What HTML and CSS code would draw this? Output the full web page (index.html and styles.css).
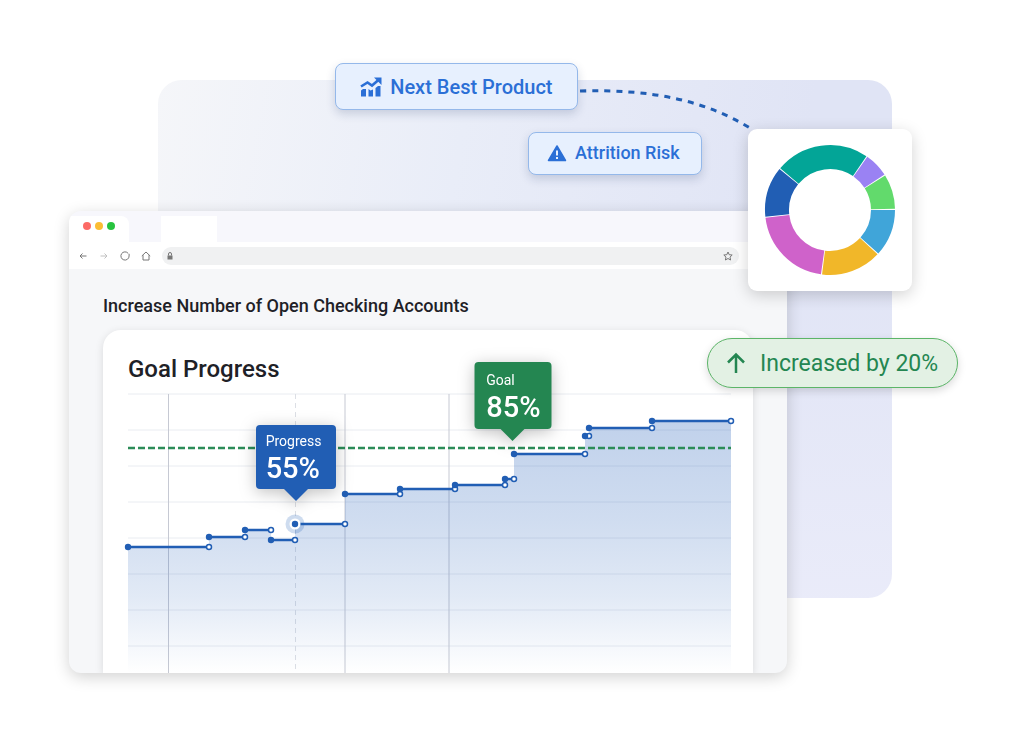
FILE: index.html
```html
<!DOCTYPE html>
<html lang="en">
<head>
    <meta charset="UTF-8">
    <meta name="viewport" content="width=device-width, initial-scale=1.0">
    <title>Goal Progress</title>
    <link rel="stylesheet" href="styles.css">
</head>
<body>
    <main class="scene">
        <div class="backdrop"></div>

        <!-- Browser window -->
        <section class="browser">
            <div class="tab-strip">
                <div class="lights">
                    <span class="light red"></span>
                    <span class="light yellow"></span>
                    <span class="light green"></span>
                </div>
                <div class="tab"></div>
            </div>
            <div class="toolbar">
                <div class="nav">
                    <button type="button" aria-label="Back">
                        <svg viewBox="0 0 10 10"><path d="M8.500 5H2M4.500 2.500 2 5l2.500 2.500"/></svg>
                    </button>
                    <button type="button" aria-label="Forward" class="disabled">
                        <svg viewBox="0 0 10 10"><path d="M1.500 5H8M5.500 2.500 8 5 5.500 7.500"/></svg>
                    </button>
                    <button type="button" aria-label="Reload">
                        <svg viewBox="0 0 10 10"><path d="M8.200 2.400A4.100 4.100 0 1 0 9.100 5M9.100 5V2.800"/></svg>
                    </button>
                    <button type="button" aria-label="Home">
                        <svg viewBox="0 0 10 10"><path d="M.8 5 5 1l4.200 4M2 4.200V9h6V4.200"/></svg>
                    </button>
                </div>
                <div class="address">
                    <svg class="lock" viewBox="0 0 10 10"><path d="M2.500 4.500h5v4h-5z" fill="#777"/><path d="M3.500 4.500V3a1.500 1.500 0 0 1 3 0v1.500" fill="none" stroke="#777"/></svg>
                    <input type="text" aria-label="Address">
                    <button type="button" aria-label="Bookmark">
                        <svg viewBox="0 0 12 12"><path d="m6 2 1.200 2.700 3 .3L8 7.100l.6 2.900L6 8.500 3.400 10 4 7.100 1.800 5l3-.3z"/></svg>
                    </button>
                </div>
            </div>

            <div class="page">
                <h1>Increase Number of Open Checking Accounts</h1>
                <div class="card">
                    <h2>Goal Progress</h2>
                    <div class="chart">
                        <svg viewBox="0 0 603 279" role="img" aria-label="Goal progress over time">
                            <defs>
                                <linearGradient id="fill" gradientUnits="userSpaceOnUse" x1="0" y1="27" x2="0" y2="279">
                                    <stop offset="0" stop-color="#1f5cb8" stop-opacity=".28"/>
                                    <stop offset=".4" stop-color="#1f5cb8" stop-opacity=".21"/>
                                    <stop offset=".7" stop-color="#1f5cb8" stop-opacity=".13"/>
                                    <stop offset="1" stop-color="#1f5cb8" stop-opacity="0"/>
                                </linearGradient>
                            </defs>
                            <path class="grid-h" d="M0 0H603M0 36H603M0 72H603M0 108H603M0 144H603M0 180H603M0 216H603M0 252H603"/>
                            <path class="grid-v" d="M40.500 0V279M217 0V279M321 0V279"/>
                            <path class="grid-today" d="M167.500 0V279"/>
                            <path fill="url(#fill)" d="M0 153H81V143H117V136H143V146H167V130H217V100H272V95H327V91H377V85H386V60H457V42H461V34H524V27H603V279H0Z"/>
                            <path class="goal-line" d="M0 54H603"/>
                            <g id="steps"></g>
                        </svg>
                        <div class="tooltip progress">
                            <span>Progress</span>
                            <strong>55%</strong>
                        </div>
                        <div class="tooltip goal">
                            <span>Goal</span>
                            <strong>85%</strong>
                        </div>
                    </div>
                </div>
            </div>
        </section>

        <!-- Floating labels -->
        <svg class="connector" viewBox="0 0 173 42"><path d="M2 3C73 1 126 12 173 41"/></svg>

        <button type="button" class="chip product">
            <svg viewBox="0 0 22 20">
                <path d="M1 13.500 3 12h3v7.500H1zM8.500 12l2 1.500 2.500-1v7H8.500zM15.500 11 18 9h2.500v10.500h-5z" fill="#2b6fd6"/>
                <path d="M1 9.500 7.500 5.500l4.500 3L19 2.500" fill="none" stroke="#2b6fd6" stroke-width="2.600"/>
                <path d="M14 .5H21.500V8z" fill="#2b6fd6"/>
            </svg>
            Next Best Product
        </button>

        <button type="button" class="chip risk">
            <svg viewBox="0 0 20 18">
                <path d="M10 2 18.500 16.500H1.500Z" fill="#2b6fd6" stroke="#2b6fd6" stroke-width="1.500" stroke-linejoin="round"/>
                <path d="M10 6.500V11.500M10 13V15" stroke="#e7f0fe" stroke-width="2"/>
            </svg>
            Attrition Risk
        </button>

        <div class="donut">
            <svg viewBox="0 0 132 132" role="img" aria-label="Product mix">
                <g id="donut" transform="rotate(-90 66 66)"></g>
            </svg>
        </div>

        <div class="pill">
            <svg viewBox="0 0 20 22"><path d="M10 21V2.500M2 10.500l8-8 8 8"/></svg>
            Increased by 20%
        </div>
    </main>

    <script src="script.js"></script>
</body>
</html>
```

FILE: styles.css
```css
* {
    box-sizing: border-box;
}

body {
    margin: 0;
    background: #fff;
    font-family: Roboto, "Liberation Sans", sans-serif;
    color: #1e2127;
}

h1, h2 {
    margin: 0;
    font-weight: 500;
}

button {
    border: none;
    padding: 0;
    background: none;
    font-family: inherit;
    cursor: pointer;
}

/* The window overlaps the backdrop through shared grid tracks */
.scene {
    position: relative;
    display: grid;
    grid-template-columns: 69fr 89fr 629fr 105fr 132fr;
    grid-template-rows: 80px 131px auto 75px 61px;
}

.backdrop {
    grid-area: 2 / 3 / 4 / 5;
    border-radius: 24px;
    background: linear-gradient(180deg, rgba(240,240,252,0) 30%, rgba(240,240,252,0.6)), linear-gradient(100deg, #f5f6f9, #e9edf8 38%, #e0e4f5 80%);
}

.browser {
    grid-area: 3 / 2 / 5 / 4;
    position: relative;
    overflow: hidden;
    border-radius: 12px;
    background: #f6f7f9;
}

.browser,
.donut {
    box-shadow: 0 4px 16px rgba(0,0,0,0.18);
}

/* Browser chrome */
.tab-strip {
    display: flex;
    height: 31px;
    padding-top: 5px;
    background: #f7f7fc;
}

.lights {
    display: flex;
    gap: 4px;
    width: 60px;
    padding: 6px 0 0 14px;
    background: #fff;
    border-radius: 0 8px 0 0;
}

.light {
    width: 8px;
    height: 8px;
    border-radius: 50%;
}

.red { background: #fc6a66; }
.yellow { background: #fbbd34; }
.green { background: #28c33f; }

.tab {
    width: 56px;
    margin-left: 32px;
    background: #fff;
}

.toolbar {
    display: flex;
    align-items: center;
    height: 27px;
    padding: 0 48px 0 9px;
    background: #fff;
}

.nav {
    display: flex;
    gap: 11px;
    margin-right: 11px;
}

.nav button,
.nav svg,
.lock {
    display: block;
    width: 10px;
    height: 10px;
}

.nav svg,
.address button svg {
    display: block;
    fill: none;
    stroke: #777;
}

.nav .disabled {
    opacity: 0.45;
}

.address {
    display: flex;
    flex: 1;
    align-items: center;
    height: 18px;
    padding: 0 5px 0 3px;
    border-radius: 9px;
    background: #f0f1f2;
}

.address input {
    flex: 1;
    min-width: 0;
    height: 16px;
    border: none;
    outline: none;
    background: transparent;
    font-size: 12px;
}

.address button svg {
    width: 12px;
    height: 12px;
}

/* Page inside the window */
.page {
    padding: 24px 34px 0;
}

h1 {
    font-size: 18px;
    line-height: 26px;
}

.card {
    margin-top: 11px;
    padding: 26px 22px 0 25px;
    border-radius: 18px 18px 0 0;
    background: #fff;
    box-shadow: 0 2px 8px rgba(0,0,0,0.12);
}

h2 {
    font-size: 24px;
    line-height: 26px;
}

.chart {
    position: relative;
    margin-top: 12px;
}

.chart > svg {
    display: block;
    width: 100%;
    overflow: visible;
}

.grid-h { stroke: #e9ecf1; }
.grid-v { stroke: #c6c9d3; }
.grid-today { stroke: #dcdfe5; stroke-dasharray: 5 4; }
.goal-line { stroke: #2c8c58; stroke-width: 2.5; stroke-dasharray: 7 3; }
.step { stroke: #215eb4; stroke-width: 2.5; }
.dot { fill: #215eb4; }
.ring { fill: #fff; stroke: #215eb4; stroke-width: 1.5; }
.halo { fill: #215eb4; fill-opacity: 0.22; }

.tooltip {
    position: absolute;
    display: flex;
    flex-direction: column;
    padding: 7px 10px 3px;
    border-radius: 4px;
    color: #fff;
    transform: translate(-50%, -100%);
    filter: drop-shadow(0 3px 8px rgba(0,0,0,0.25));
}

.tooltip::after {
    content: "";
    position: absolute;
    top: calc(100% - 1px);
    left: 50%;
    margin-left: -13px;
    border: 13px solid transparent;
    border-bottom: none;
}

.tooltip span {
    font-size: 14px;
    line-height: 18px;
}

.tooltip strong {
    font-size: 29px;
    font-weight: 500;
    line-height: 36px;
}

.tooltip.progress {
    left: 27.8%;
    top: 34%;
    width: 80px;
    background: #215eb4;
}

.tooltip.progress::after {
    border-top-color: #215eb4;
}

.tooltip.goal {
    left: 63.8%;
    top: 12.4%;
    width: 77px;
    padding: 9px 12px 4px;
    background: #248651;
}

.tooltip.goal::after {
    border-top-color: #248651;
}

/* Floating labels */
.connector {
    position: absolute;
    top: 88px;
    left: 56.4%;
    width: 17%;
    fill: none;
    stroke: #215eb4;
    stroke-width: 3;
    stroke-dasharray: 6 6;
}

.chip {
    position: absolute;
    display: flex;
    align-items: center;
    justify-content: center;
    border: 1px solid #94b8ea;
    border-radius: 8px;
    background: #e7f0fe;
    box-shadow: 0 4px 10px rgba(30,50,100,0.18);
    color: #2b6fd6;
    font-weight: 500;
    white-space: nowrap;
}

.product {
    top: 63px;
    left: 32.7%;
    gap: 8px;
    width: 243px;
    height: 47px;
    font-size: 20px;
}

.product svg {
    width: 22px;
    height: 20px;
}

.risk {
    top: 132px;
    left: 51.6%;
    gap: 8px;
    width: 174px;
    height: 43px;
    padding-right: 4px;
    padding-bottom: 2px;
    font-size: 18px;
}

.risk svg {
    width: 20px;
    height: 18px;
}

.donut {
    position: absolute;
    top: 129px;
    left: 73%;
    width: 164px;
    padding: 15px 16px;
    border-radius: 9px;
    background: #fff;
}

.donut svg {
    display: block;
    width: 132px;
    height: 132px;
}

.pill {
    position: absolute;
    top: 338px;
    left: 69%;
    display: flex;
    align-items: center;
    justify-content: center;
    gap: 14px;
    width: 251px;
    height: 50px;
    border: 1px solid #5cb568;
    border-radius: 25px;
    background: #e3f1e4;
    box-shadow: 0 3px 8px rgba(0,0,0,0.15);
    color: #248651;
    font-size: 23px;
    white-space: nowrap;
}

.pill svg {
    width: 20px;
    height: 22px;
    fill: none;
    stroke: #248651;
    stroke-width: 2.5;
}
```

FILE: script.js
```js
const SVG = 'http://www.w3.org/2000/svg';

function add(parent, tag, attrs) {
    const el = document.createElementNS(SVG, tag);
    Object.keys(attrs).forEach(key => el.setAttribute(key, attrs[key]));
    parent.appendChild(el);
}

// Each step: start x, end x, y
const steps = [
    [0, 81, 153], [81, 117, 143], [117, 143, 136], [143, 167, 146],
    [167, 217, 130], [217, 272, 100], [272, 327, 95], [327, 377, 91],
    [377, 386, 85], [386, 457, 60], [457, 461, 42], [461, 524, 34],
    [524, 603, 27]
];
const stepGroup = document.getElementById('steps');
steps.forEach(([x1, x2, y]) => {
    add(stepGroup, 'line', { class: 'step', x1: x1, x2: x2, y1: y, y2: y });
    add(stepGroup, 'circle', { class: 'ring', cx: x2, cy: y, r: 2.5 });
});
// Current position marker sits under its dot
add(stepGroup, 'circle', { class: 'halo', cx: 167, cy: 130, r: 9.5 });
add(stepGroup, 'circle', { fill: '#fff', cx: 167, cy: 130, r: 5.5 });
steps.forEach(([x1, x2, y]) => {
    add(stepGroup, 'circle', { class: 'dot', cx: x1, cy: y, r: 3.2 });
});

// Slices: start and end angle, clockwise from the top
const slices = [
    [35, 58, '#9a82f3'], [58, 90, '#62da6c'], [90, 133, '#40a5d9'],
    [133, 188, '#f1b729'], [188, 264, '#cf62ca'], [264, 310, '#215eb4'],
    [310, 395, '#03a597']
];
const donut = document.getElementById('donut');
slices.forEach(([from, to, color]) => {
    add(donut, 'circle', {
        cx: 66, cy: 66, r: 53, fill: 'none', stroke: color, 'stroke-width': 24,
        pathLength: 360,
        'stroke-dasharray': (to - from - 1) + ' ' + (361 - to + from),
        transform: 'rotate(' + from + ' 66 66)'
    });
});
```
